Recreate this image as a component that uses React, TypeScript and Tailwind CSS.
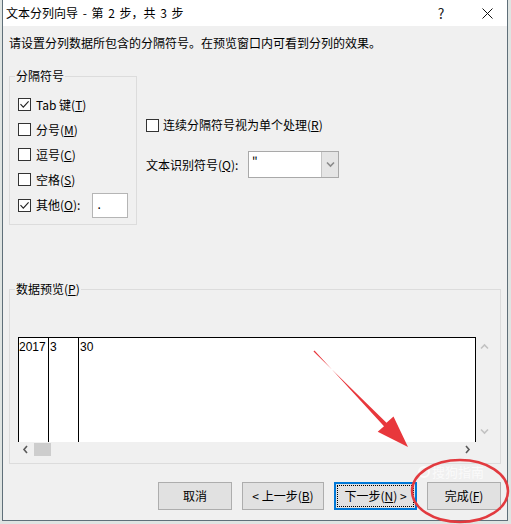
import React from 'react'

// Checkbox in the classic Windows 10 style
const Check = ({ checked }: { checked?: boolean }) => (
  <span className="w-[13px] h-[13px] border border-[#333333] bg-white flex items-center justify-center shrink-0">
    {checked && (
      <svg width="11" height="11" viewBox="0 0 11 11">
        <path d="M1.5 5.2 L4.3 8.2 L9.6 2.4" fill="none" stroke="#222" strokeWidth="1.1" />
      </svg>
    )}
  </span>
)

const Chevron = ({ dir, color }: { dir: 'l' | 'r' | 'u' | 'd'; color: string }) => {
  const d = {
    l: 'M5 1 L2 4.5 L5 8',
    r: 'M2 1 L5 4.5 L2 8',
    u: 'M1 5.5 L4.5 2 L8 5.5',
    d: 'M1 2.5 L4.5 6 L8 2.5',
  }[dir]
  return (
    <svg width="9" height="9" viewBox="0 0 9 9">
      <path d={d} fill="none" stroke={color} strokeWidth="1.6" />
    </svg>
  )
}

const SepRow = ({ checked, label, k }: { checked?: boolean; label: string; k: string }) => (
  <div className="h-[25px] flex items-center gap-[5px]">
    <Check checked={checked} />
    <span>
      {label}(<u>{k}</u>)
    </span>
  </div>
)

const Button = ({ children, w }: { children: React.ReactNode; w: string }) => (
  <div className={`${w} h-[28px] bg-[#e1e1e1] border border-[#adadad] flex items-center justify-center`}>
    {children}
  </div>
)

export default function App() {
  return (
    <div className="w-[511px] h-[524px] bg-[#dfe4e2] relative overflow-hidden pl-[2px] text-[12px] leading-[16px] text-black font-['Noto_Sans_CJK_SC','Noto_Sans',sans-serif]">
      <div className="w-[506px] h-[521px] border-x border-b border-[#5f6f79] bg-[#f0f0f0] flex flex-col">
        {/* Title bar */}
        <div className="h-[26px] bg-white flex items-center pl-[3px] shrink-0">
          <span className="[word-spacing:2px]">文本分列向导 - 第 2 步，共 3 步</span>
          <span className="ml-auto w-[30px] mr-[11px] text-center text-[14px] text-[#222]">?</span>
          <span className="w-[40px] flex justify-center">
            <svg width="11" height="11" viewBox="0 0 11 11">
              <path d="M0.5 0.5 L10.5 10.5 M10.5 0.5 L0.5 10.5" stroke="#111" strokeWidth="1" />
            </svg>
          </span>
        </div>

        <div className="pt-[9px] pl-[6px]">请设置分列数据所包含的分隔符号。在预览窗口内可看到分列的效果。</div>

        {/* Delimiters + options */}
        <div className="flex items-start mt-[17px]">
          <fieldset className="ml-[6px] w-[128px] border border-[#dcdcdc] p-0">
            <legend className="ml-[5px] px-[1px]">分隔符号</legend>
            <div className="pl-[8px] pt-[8px] pb-[6px]">
              <div className="h-[25px] flex items-center gap-[5px]">
                <Check checked />
                <span>
                  Tab 键(<u>T</u>)
                </span>
              </div>
              <SepRow label="分号" k="M" />
              <SepRow label="逗号" k="C" />
              <SepRow label="空格" k="S" />
              <div className="h-[26px] flex items-center">
                <Check checked />
                <span className="ml-[5px]">
                  其他(<u>O</u>):
                </span>
                <div className="ml-[12px] w-[36px] h-[25px] bg-white border border-[#b5b5b5] pl-[4px] pt-[3px] leading-[14px]">
                  .
                </div>
              </div>
            </div>
          </fieldset>

          <div className="ml-[9px] flex flex-col">
            <div className="mt-[49px] h-[16px] flex items-center gap-[4px]">
              <Check />
              <span>
                连续分隔符号视为单个处理(<u>R</u>)
              </span>
            </div>
            <div className="mt-[18px] flex items-center">
              <span className="w-[102px]">
                文本识别符号(<u>Q</u>):
              </span>
              <div className="w-[91px] h-[27px] border border-[#a9a9a9] bg-white flex">
                <span className="flex-1 pl-[3px] pt-[2px] leading-[14px]">"</span>
                <span className="w-[17px] bg-[#e5e5e5] border-l border-[#c4c4c4] flex items-center justify-center">
                  <Chevron dir="d" color="#8a8a8a" />
                </span>
              </div>
            </div>
          </div>
        </div>

        {/* Data preview */}
        <fieldset className="mt-[56px] ml-[6px] w-[492px] border border-[#dcdcdc] p-0">
          <legend className="ml-[5px] px-[1px]">
            数据预览(<u>P</u>)
          </legend>
          <div className="pt-[40px] pl-[8px] pb-[6px] flex">
            <div className="w-[458px] flex flex-col">
              <div className="h-[105px] bg-white border-x border-t border-black flex font-['Liberation_Sans',sans-serif] leading-[14px]">
                <div className="w-[30px] border-r border-black pt-[2px]">2017</div>
                <div className="w-[30px] border-r border-black pt-[2px] pl-[1px]">3</div>
                <div className="flex-1 pt-[2px] pl-[1px]">30</div>
              </div>
              <div className="h-[15px] flex items-center">
                <span className="w-[16px] flex justify-center">
                  <Chevron dir="l" color="#5a5a5a" />
                </span>
                <span className="w-[17px] h-[13px] bg-[#cdcdcd]" />
                <span className="ml-auto w-[16px] flex justify-center">
                  <Chevron dir="r" color="#5a5a5a" />
                </span>
              </div>
            </div>
            <div className="w-[17px] h-[105px] flex flex-col items-center justify-between py-[6px]">
              <Chevron dir="u" color="#c2c2c2" />
              <Chevron dir="d" color="#c2c2c2" />
            </div>
          </div>
        </fieldset>

        {/* Buttons */}
        <div className="mt-[18px] flex justify-end gap-[10px] pr-[6px]">
          <Button w="w-[74px]">取消</Button>
          <Button w="w-[82px]">
            &lt; 上一步(<u>B</u>)
          </Button>
          <div className="w-[83px] h-[28px] bg-[#e1e1e1] border-2 border-[#0078d7] p-[1px]">
            <div className="h-full border border-dotted border-black flex items-center justify-center">
              下一步(<u>N</u>) &gt;
            </div>
          </div>
          <Button w="w-[74px]">
            完成(<u>F</u>)
          </Button>
        </div>
      </div>

      {/* Watermark */}
      <div className="absolute left-[418px] top-[464px] flex items-center gap-[2px] text-[13px] text-white/70 pointer-events-none">
        <span className="w-[12px] h-[12px] rounded-full border-2 border-white/70" />
        <span>搜狗指南</span>
      </div>

      {/* Red annotation */}
      <svg className="absolute left-0 top-0 pointer-events-none" width="511" height="524" viewBox="0 0 511 524">
        <polygon
          points="313.5,351.5 386.5,422.8 393.5,416.4 408,447 377.7,431.8 384,426.2 314.5,350.5"
          fill="#e8373c"
        />
        <ellipse cx="460" cy="491" rx="48" ry="31" fill="none" stroke="#e23a3f" strokeWidth="2.5" />
      </svg>
    </div>
  )
}
